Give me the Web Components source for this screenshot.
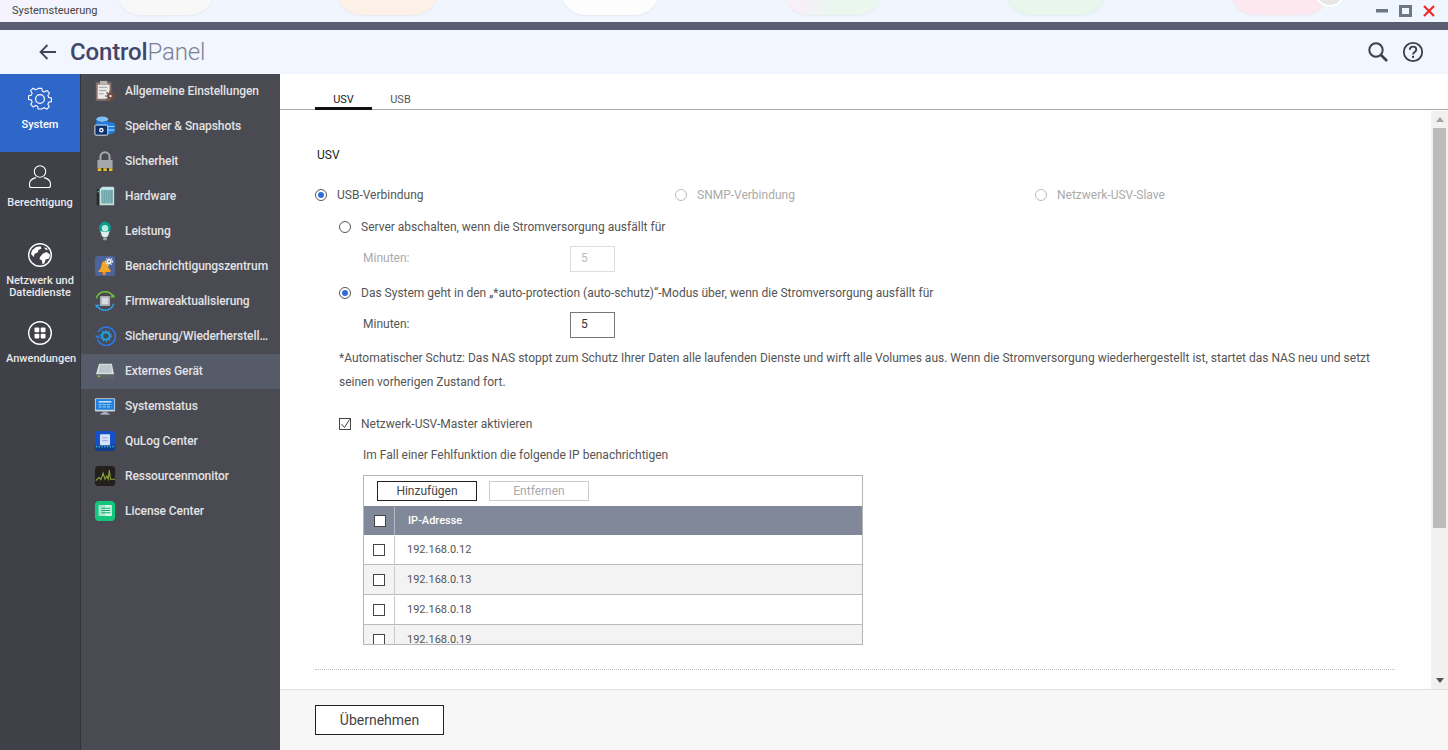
<!DOCTYPE html>
<html lang="de">
<head>
<meta charset="utf-8">
<title>Systemsteuerung</title>
<style>
  html, body { margin: 0; height: 100%; overflow: hidden; }
  body { font-family: Roboto, "Liberation Sans", sans-serif; font-size: 12px; color: #555; }
  svg { display: block; }
</style>
</head>
<body>
<qts-window>
  <qts-titlebar slot="titlebar" label="Systemsteuerung"></qts-titlebar>
  <qts-header slot="header"></qts-header>

  <qts-rail slot="rail">
    <rail-item active>
      <svg slot="icon" width="26" height="26" viewBox="0 0 26 26" fill="none" stroke="#fff" stroke-width="1.2" stroke-linejoin="round"><path d="M11 2h4l.7 3.1 2.2.9 2.7-1.7 2.8 2.8-1.7 2.7.9 2.2 3.1.7v4l-3.1.7-.9 2.2 1.7 2.7-2.8 2.8-2.7-1.7-2.2.9L15 24.9h-4l-.7-3.1-2.2-.9-2.7 1.7-2.8-2.8 1.7-2.7-.9-2.2-3.1-.7v-4l3.1-.7.9-2.2-1.7-2.7 2.8-2.8 2.7 1.7 2.2-.9z" transform="translate(1.3 .6) scale(.9)"/><circle cx="13" cy="13" r="4.4"/></svg>
      System
    </rail-item>
    <rail-item>
      <svg slot="icon" width="26" height="26" viewBox="0 0 26 26" fill="none" stroke="#fff" stroke-width="1.1"><circle cx="13" cy="7.500" r="5.700"/><path d="M9 13.600C5 14.600 2.500 16.500 2.500 20v1.500c0 1 .7 2 2 2h17c1.300 0 2-1 2-2V20c0-3.500-2.500-5.400-6.500-6.400"/></svg>
      Berechtigung
    </rail-item>
    <rail-item>
      <svg slot="icon" width="26" height="26" viewBox="0 0 26 26"><circle cx="13" cy="13" r="11.300" fill="none" stroke="#fff" stroke-width="1.400"/><path d="M5 8.500 9 5l4.500-.8 1 2.300-3 1.500-.8 2.500-3 1.200-1 3.300L4 12zM13 15l3-3.500 3.500-1.500 3.500 2.500-.8 4-3.700 1-1 3.500-2 1.500-.5-4-2.500-1.500zM17 5.500l2.500.5 1.500 2-2.500-.5z" fill="#fff"/></svg>
      Netzwerk und Dateidienste
    </rail-item>
    <rail-item>
      <svg slot="icon" width="26" height="26" viewBox="0 0 26 26"><circle cx="13" cy="13" r="11.300" fill="none" stroke="#fff" stroke-width="1.400"/><g fill="#fff"><rect x="7.500" y="7.500" width="4.800" height="4.800" rx="1"/><rect x="13.700" y="7.500" width="4.800" height="4.800" rx="1"/><rect x="7.500" y="13.700" width="4.800" height="4.800" rx="1"/><rect x="13.700" y="13.700" width="4.800" height="4.800" rx="1"/></g></svg>
      Anwendungen
    </rail-item>
  </qts-rail>

  <qts-menu slot="menu">
    <menu-item>
      <svg slot="icon" viewBox="0 0 24 24"><rect x="2" y="2.500" width="17" height="20" rx="1" fill="#86706a"/><rect x="4" y="5" width="13" height="15.500" fill="#eceae8"/><rect x="6.500" y="1" width="8" height="3.500" fill="#b9b3ae"/><path d="M5.500 8h9M5.500 11.500h8M5.500 15h5" stroke="#9a9a9a"/><circle cx="18" cy="17.500" r="3.800" fill="#6a4e42"/><circle cx="18" cy="17.500" r="5" fill="none" stroke="#6a4e42" stroke-width="1.400" stroke-dasharray="1.800 1.800"/><circle cx="18" cy="17.500" r="1.400" fill="#e6d9ce"/></svg>
      Allgemeine Einstellungen
    </menu-item>
    <menu-item>
      <svg slot="icon" viewBox="0 0 24 24"><ellipse cx="9" cy="4.500" rx="6.500" ry="3" fill="#7cc0f5"/><path d="M2.500 4.500V11h13V4.500c0 1.700-3 3-6.500 3s-6.500-1.300-6.500-3z" fill="#1f7fe0"/><path d="M14 8h5c2 0 3.500.8 3.500 2v8c0 1.500-3 3-7 3H14z" fill="#1f7fe0"/><path d="M15 12.500h7.500M15 16.500h7.500" stroke="#8fd0f8" stroke-width="1.200"/><rect x="1" y="11" width="14" height="11" rx="1" fill="#0f2f66" stroke="#e8f2ff"/><circle cx="8" cy="16.500" r="2.500" fill="#e8f2ff"/><circle cx="8" cy="16.500" r="1" fill="#0f2f66"/></svg>
      Speicher &amp; Snapshots
    </menu-item>
    <menu-item>
      <svg slot="icon" viewBox="0 0 24 24"><path d="M7 11V7.500a5 5 0 0 1 10 0V11" fill="none" stroke="#a9abb2" stroke-width="2.200"/><path d="M4.500 11h15a.8.8 0 0 1 .8.800V20H3.700v-8.200a.8.8 0 0 1 .8-.8z" fill="#a5a7ae"/><rect x="3.700" y="20" width="16.600" height="3" fill="#34343a"/><path d="M4 20h4v3H4zM10.200 20h3.800v3h-3.800zM16.400 20h3.800v3h-3.800z" fill="#e9c22b"/></svg>
      Sicherheit
    </menu-item>
    <menu-item>
      <svg slot="icon" viewBox="0 0 24 24"><path d="M3 4.500h3.500V22H3z" fill="#24282a"/><path d="M6 4.500 9 2h11.500a1.500 1.500 0 0 1 1.500 1.500V22H6z" fill="#bfe3e6"/><rect x="8" y="5.500" width="12.500" height="14.500" fill="#6da3a8"/><path d="M10 5.500V20M12.500 5.500V20M15 5.500V20M17.500 5.500V20" stroke="#8fc2c6" stroke-width=".9"/><path d="M9 20.500h11" stroke="#d5c55a" stroke-dasharray="1 1.500"/><rect x="4" y="6.500" width="1.500" height="1.500" fill="#4cd06a"/></svg>
      Hardware
    </menu-item>
    <menu-item>
      <svg slot="icon" viewBox="0 0 24 24"><path d="M12 1.500a7 7 0 0 1 6.500 7c0 3.500-2 5-2.500 7.500H8c-.5-2.500-2.500-4-2.500-7.500a7 7 0 0 1 6.500-7z" fill="#0f9a89"/><circle cx="12" cy="9" r="3.500" fill="#b5f0df"/><path d="M6.800 12c2 1.200 8.400 1.200 10.400 0-.8 1.400-1.200 2.600-1.400 4-.2 1.400-1.200 3-3.800 3s-3.600-1.600-3.800-3c-.2-1.400-.6-2.600-1.400-4z" fill="#dfecee"/><path d="M9.800 19.500h4.400l-.5 2.500h-3.400z" fill="#a0a3aa"/></svg>
      Leistung
    </menu-item>
    <menu-item>
      <svg slot="icon" viewBox="0 0 24 24"><rect x="1" y="1" width="22" height="22" rx="3.500" fill="#4d6499"/><path d="M11 6.500c3 .5 4.500 3 4.500 5.500 0 3 1.500 4 3 5l-1 1.500H5.500l-1-1c2-1 3-3 3.500-5.500.4-2.500 1-5 3-5.500z" fill="#f5a623"/><circle cx="11" cy="20" r="2" fill="#f08a1d"/><circle cx="16.500" cy="7" r="2.800" fill="#f2f4f8"/><circle cx="16.500" cy="7" r="3.800" fill="none" stroke="#f2f4f8" stroke-width="1.200" stroke-dasharray="1.400 1.400"/><circle cx="16.500" cy="7" r="1" fill="#4d6499"/></svg>
      Benachrichtigungszentrum
    </menu-item>
    <menu-item>
      <svg slot="icon" viewBox="0 0 24 24"><path d="M2.500 9C4 4.500 7.500 2 12 2c4 0 7 1.800 8.500 5" fill="none" stroke="#6fc92f" stroke-width="1.600"/><path d="m23 8-5.500.2 3.800-3.800z" fill="#6fc92f"/><path d="M21.500 15c-1.500 4.500-5 7-9.500 7-4 0-7-1.800-8.500-5" fill="none" stroke="#2f9fe0" stroke-width="1.600"/><path d="m1 16 5.500-.2-3.800 3.800z" fill="#2f9fe0"/><rect x="6.500" y="6.500" width="11" height="11" rx="1" fill="#a9adb5"/><rect x="8.500" y="8.500" width="7" height="7" fill="#d8dbe0"/></svg>
      Firmwareaktualisierung
    </menu-item>
    <menu-item>
      <svg slot="icon" viewBox="0 0 24 24"><path d="M4.500 7.500A10 10 0 1 1 4 16" fill="none" stroke="#2b79e8" stroke-width="1.800"/><path d="m.5 11.500 6.500.2-3 3.300z" fill="#2b79e8"/><circle cx="13" cy="12" r="4" fill="none" stroke="#1fa6ee" stroke-width="2"/><circle cx="13" cy="12" r="5.700" fill="none" stroke="#1fa6ee" stroke-width="1.500" stroke-dasharray="1.800 1.800"/></svg>
      Sicherung/Wiederherstellung
    </menu-item>
    <menu-item active>
      <svg slot="icon" viewBox="0 0 24 24"><path d="M5.500 4h14l2.500 12H2z" fill="#d8dde0"/><path d="M6.700 5.500h11.600l1.500 8.500H4.800z" fill="#bcc6c9"/><path d="M2 15.500h20V19a1 1 0 0 1-1 1H3a1 1 0 0 1-1-1z" fill="#5f6468"/><rect x="4.500" y="17" width="2" height="1.500" fill="#9fdc3c"/></svg>
      Externes Gerät
    </menu-item>
    <menu-item>
      <svg slot="icon" viewBox="0 0 24 24"><rect x="1" y="3.500" width="22" height="14.500" rx="1" fill="#c4d2dc"/><rect x="2" y="4.500" width="20" height="11.500" fill="#1f7fdc"/><path d="M5 7.500h14" stroke="#fff" stroke-width="1.300"/><path d="M5 10.500h14M5 13h14" stroke="#bcdcf6" stroke-dasharray="3.500 1"/><path d="M9.500 18h5v2h2.500v1.500H7V20h2.500z" fill="#a6b2ba"/></svg>
      Systemstatus
    </menu-item>
    <menu-item>
      <svg slot="icon" viewBox="0 0 24 24"><rect x="1" y="1" width="22" height="22" rx="4" fill="#1450c8"/><path d="M1 16h22v3a4 4 0 0 1-4 4H5a4 4 0 0 1-4-4z" fill="#0f3c86"/><rect x="6.500" y="4.500" width="11" height="12" rx="1" fill="#d6e2f7"/><path d="M9 8.500h6M9 11.500h6" stroke="#8fa8da"/><path d="M2 18h20" stroke="#2fa9e8" stroke-dasharray="1.500 1.500" stroke-width="2"/></svg>
      QuLog Center
    </menu-item>
    <menu-item>
      <svg slot="icon" viewBox="0 0 24 24"><rect x="1" y="1" width="22" height="22" rx="4" fill="#221f1c"/><path d="m2 17 3.500-3.500 2 2.500 2.500-7 2 6.500 2-3.500 1.500 3.500 1.200-10 1.300 10H23" fill="none" stroke="#8ea43c" stroke-width="1.200"/></svg>
      Ressourcenmonitor
    </menu-item>
    <menu-item>
      <svg slot="icon" viewBox="0 0 24 24"><rect x="1" y="1" width="22" height="22" rx="4.500" fill="#12c77c"/><rect x="5" y="5.500" width="14.500" height="12" rx="1" fill="#d2f5e6"/><path d="M5 5.500h7v12H5z" fill="#0e8f5b" opacity=".2"/><path d="M8 9h10M8 11.500h10M8 14h10" stroke="#12b271" stroke-width="1.100"/></svg>
      License Center
    </menu-item>
  </qts-menu>

  <qts-tabs slot="tabs">
    <tab-item active>USV</tab-item>
    <tab-item>USB</tab-item>
  </qts-tabs>

  <qts-scroll slot="content">
    <ups-settings></ups-settings>
  </qts-scroll>

  <qts-footer slot="footer">
    <qts-button large>Übernehmen</qts-button>
  </qts-footer>
</qts-window>

<script>
class QtsWindow extends HTMLElement {
  constructor() {
    super();
    this.attachShadow({ mode: 'open' });
  }

  connectedCallback() {
    this.shadowRoot.innerHTML = `
      <style>
        :host {
          display: grid;
          grid-template-columns: 81px 199px 1fr;
          grid-template-rows: 22px 52px 36px 1fr 61px;
          grid-template-areas:
            "title title title"
            "head head head"
            "rail menu tabs"
            "rail menu body"
            "rail menu foot";
          width: 1448px;
          height: 750px;
          background: #fff;
          overflow: hidden;
        }
        ::slotted([slot=titlebar]) { grid-area: title; }
        ::slotted([slot=header]) { grid-area: head; }
        ::slotted([slot=rail]) { grid-area: rail; }
        ::slotted([slot=menu]) { grid-area: menu; }
        ::slotted([slot=tabs]) { grid-area: tabs; }
        ::slotted([slot=content]) { grid-area: body; min-height: 0; }
        ::slotted([slot=footer]) { grid-area: foot; }
      </style>
      <slot name="titlebar"></slot>
      <slot name="header"></slot>
      <slot name="rail"></slot>
      <slot name="menu"></slot>
      <slot name="tabs"></slot>
      <slot name="content"></slot>
      <slot name="footer"></slot>
    `;
  }
}

class QtsTitlebar extends HTMLElement {
  constructor() {
    super();
    this.attachShadow({ mode: 'open' });
  }

  connectedCallback() {
    this.shadowRoot.innerHTML = `
      <style>
        :host {
          display: flex;
          align-items: center;
          position: relative;
          overflow: hidden;
          height: 22px;
          padding: 0 13px 0 12px;
          background: linear-gradient(90deg, #f5f3fd 0, #f1f5fe 12%, #f0f6fe 100%);
          font-size: 11px;
          color: #444;
        }
        .label { position: relative; flex: 1; padding-bottom: 2px; }
        .blob {
          position: absolute;
          top: -40px;
          height: 55px;
          border-radius: 26px;
          box-shadow: 0 1px 2px rgba(0, 0, 0, .05);
        }
        .dot {
          position: absolute;
          left: 1315px;
          top: -23px;
          box-sizing: border-box;
          width: 30px;
          height: 30px;
          border-radius: 50%;
          background: #e6e6e6;
          border: 2px solid #fff;
        }
        .controls { position: relative; display: flex; align-items: center; gap: 11px; }
      </style>
      <span class="blob" style="left:115px;width:100px;background:#f8f8f8"></span>
      <span class="blob" style="left:336px;width:103px;background:#fdf0e6"></span>
      <span class="blob" style="left:560px;width:100px;background:#fdfdfd"></span>
      <span class="blob" style="left:783px;width:100px;background:linear-gradient(120deg,#f8eff8 30%,#e9f7ef 60%)"></span>
      <span class="blob" style="left:1005px;width:102px;background:#e8f7ee"></span>
      <span class="blob" style="left:1230px;width:99px;background:#fde8ef"></span>
      <span class="dot"></span>
      <span class="label">${this.getAttribute('label')}</span>
      <span class="controls">
        <svg width="12" height="12" viewBox="0 0 12 12"><rect y="4" width="12" height="3.500" fill="#6f7686"/></svg>
        <svg width="13" height="12" viewBox="0 0 13 12"><rect x="1.500" y="1.500" width="10" height="9" fill="none" stroke="#6f7686" stroke-width="3"/></svg>
        <svg width="12" height="12" viewBox="0 0 12 12"><path d="m1 1 10 10M11 1 1 11" stroke="#ef2a2a" stroke-width="2.200"/></svg>
      </span>
    `;
  }
}

class QtsHeader extends HTMLElement {
  constructor() {
    super();
    this.attachShadow({ mode: 'open' });
  }

  connectedCallback() {
    this.shadowRoot.innerHTML = `
      <style>
        :host {
          display: flex;
          align-items: center;
          box-sizing: border-box;
          height: 52px;
          padding: 0 24px 0 39px;
          background: #f2f6fe;
          border-top: 8px solid #5a5d72;
        }
        .logo { flex: 1; margin-left: 14px; font-size: 24px; line-height: 44px; letter-spacing: -.15px; }
        .logo b { font-weight: 500; color: #43466a; }
        .logo span { font-weight: 300; color: #7b7f94; }
        .tools { display: flex; align-items: center; gap: 13px; }
      </style>
      <svg width="17" height="16" viewBox="0 0 17 16" fill="none" stroke="#43465a" stroke-width="1.800"><path d="M17 8H1.500M8.500 1 1.500 8l7 7"/></svg>
      <div class="logo"><b>Control</b><span>Panel</span></div>
      <div class="tools">
        <svg width="22" height="22" viewBox="0 0 22 22" fill="none" stroke="#3d3f4a"><circle cx="9" cy="9" r="6.700" stroke-width="2"/><path d="m14 14 6 6" stroke-width="2.600"/></svg>
        <svg width="22" height="22" viewBox="0 0 22 22" fill="none" stroke="#3d3f4a"><circle cx="11" cy="11" r="9.200" stroke-width="1.800"/><path d="M7.800 8.800c0-2 1.400-3.200 3.300-3.200s3.200 1.200 3.200 2.900c0 2.500-3.200 2.500-3.200 5" stroke-width="1.900"/><rect x="10" y="14.800" width="2.100" height="2.100" fill="#3d3f4a" stroke="none"/></svg>
      </div>
    `;
  }
}

class QtsRail extends HTMLElement {
  constructor() {
    super();
    this.attachShadow({ mode: 'open' });
  }

  connectedCallback() {
    this.shadowRoot.innerHTML = `
      <style>
        :host {
          display: flex;
          flex-direction: column;
          box-sizing: border-box;
          width: 81px;
          background: #3f4048;
          border-right: 1px solid #34343b;
        }
      </style>
      <slot></slot>
    `;
  }
}

class RailItem extends HTMLElement {
  constructor() {
    super();
    this.attachShadow({ mode: 'open' });
  }

  connectedCallback() {
    this.shadowRoot.innerHTML = `
      <style>
        :host {
          display: flex;
          flex-direction: column;
          align-items: center;
          box-sizing: border-box;
          height: 78px;
          padding: 12px 6px 0;
          color: #e9e9ec;
          font-size: 11px;
          font-weight: 500;
          line-height: 12px;
          text-align: center;
        }
        :host([active]) { background: #2f67c8; color: #fff; }
        .text { width: 68px; margin-top: 7px; }
      </style>
      <slot name="icon"></slot>
      <div class="text"><slot></slot></div>
    `;
  }
}

class QtsMenu extends HTMLElement {
  constructor() {
    super();
    this.attachShadow({ mode: 'open' });
  }

  connectedCallback() {
    this.shadowRoot.innerHTML = `
      <style>
        :host {
          display: flex;
          flex-direction: column;
          background: #4a4a52;
        }
      </style>
      <slot></slot>
    `;
  }
}

class MenuItem extends HTMLElement {
  constructor() {
    super();
    this.attachShadow({ mode: 'open' });
  }

  connectedCallback() {
    this.shadowRoot.innerHTML = `
      <style>
        :host {
          display: flex;
          align-items: center;
          gap: 9px;
          box-sizing: border-box;
          height: 35px;
          padding: 0 10px 1px 13px;
          color: #e2e2e4;
          font-size: 12px;
          font-weight: 500;
          letter-spacing: -.08px;
        }
        :host([active]) { background: #565b69; }
        ::slotted(svg) { flex: none; width: 22px; height: 22px; }
        .text { flex: 1; min-width: 0; white-space: nowrap; overflow: hidden; text-overflow: ellipsis; }
      </style>
      <slot name="icon"></slot>
      <div class="text"><slot></slot></div>
    `;
  }
}

class QtsTabs extends HTMLElement {
  constructor() {
    super();
    this.attachShadow({ mode: 'open' });
  }

  connectedCallback() {
    this.shadowRoot.innerHTML = `
      <style>
        :host {
          display: flex;
          box-sizing: border-box;
          height: 36px;
          padding-left: 35px;
          border-bottom: 1px solid #aaa;
          align-items: flex-end;
        }
      </style>
      <slot></slot>
    `;
  }
}

class TabItem extends HTMLElement {
  constructor() {
    super();
    this.attachShadow({ mode: 'open' });
  }

  connectedCallback() {
    this.shadowRoot.innerHTML = `
      <style>
        :host {
          display: block;
          box-sizing: border-box;
          width: 57px;
          height: 19px;
          margin-bottom: -1px;
          font-size: 11px;
          line-height: 18px;
          text-align: center;
          color: #555;
        }
        :host([active]) { color: #222; border-bottom: 3px solid #111; }
      </style>
      <slot></slot>
    `;
  }
}

class QtsScroll extends HTMLElement {
  constructor() {
    super();
    this.attachShadow({ mode: 'open' });
  }

  connectedCallback() {
    this.shadowRoot.innerHTML = `
      <style>
        :host { display: flex; overflow: hidden; }
        .view { flex: 1; min-width: 0; overflow: hidden; }
        .bar {
          display: flex;
          flex-direction: column;
          align-items: center;
          box-sizing: border-box;
          width: 17px;
          margin-top: 1px;
          background: #f1f1f1;
        }
        .arrow { flex: none; height: 17px; display: flex; align-items: center; justify-content: center; }
        .track { flex: 1; width: 13px; }
        .thumb { height: 400px; background: #bcbcbc; }
      </style>
      <div class="view"><slot></slot></div>
      <div class="bar">
        <div class="arrow"><svg width="8" height="5" viewBox="0 0 8 5"><path d="M4 0 8 5H0z" fill="#a5a5a5"/></svg></div>
        <div class="track"><div class="thumb"></div></div>
        <div class="arrow"><svg width="8" height="5" viewBox="0 0 8 5"><path d="M4 5 8 0H0z" fill="#555"/></svg></div>
      </div>
    `;
  }
}

class QtsRadio extends HTMLElement {
  constructor() {
    super();
    this.attachShadow({ mode: 'open' });
  }

  connectedCallback() {
    this.shadowRoot.innerHTML = `
      <style>
        :host { display: inline-flex; align-items: center; gap: 10px; height: 20px; }
        :host([disabled]) { color: #aaa; }
        .dot {
          box-sizing: border-box;
          display: flex;
          align-items: center;
          justify-content: center;
          width: 12px;
          height: 12px;
          border: 1px solid #555;
          border-radius: 50%;
          background: #fff;
        }
        :host([disabled]) .dot { border-color: #bbb; }
        :host([checked]) .dot::after {
          content: "";
          width: 6px;
          height: 6px;
          border-radius: 50%;
          background: #2e6bd6;
        }
      </style>
      <span class="dot"></span><span><slot></slot></span>
    `;
  }
}

class QtsCheckbox extends HTMLElement {
  constructor() {
    super();
    this.attachShadow({ mode: 'open' });
  }

  connectedCallback() {
    this.shadowRoot.innerHTML = `
      <style>
        :host { display: inline-flex; align-items: center; gap: 10px; }
        .box {
          box-sizing: border-box;
          width: 12px;
          height: 12px;
          border: 1px solid #444;
          background: #fff;
          overflow: visible;
        }
      </style>
      <span class="box">${this.hasAttribute('checked')
        ? '<svg width="12" height="12" viewBox="0 0 12 12" fill="none" stroke="#444" style="display:block;margin:-1px"><path d="m2.500 6 3 3.500L10.500 1.500"/></svg>'
        : ''}</span><slot></slot>
    `;
  }
}

class QtsButton extends HTMLElement {
  constructor() {
    super();
    this.attachShadow({ mode: 'open' });
  }

  connectedCallback() {
    this.shadowRoot.innerHTML = `
      <style>
        :host {
          display: inline-flex;
          align-items: center;
          justify-content: center;
          box-sizing: border-box;
          width: 100px;
          height: 20px;
          border: 1px solid #222;
          background: #fff;
          color: #444;
        }
        :host([disabled]) { border-color: #ccc; color: #aaa; }
        :host([large]) { width: 129px; height: 30px; font-size: 14px; }
      </style>
      <slot></slot>
    `;
  }
}

class IpTable extends HTMLElement {
  constructor() {
    super();
    this.attachShadow({ mode: 'open' });
  }

  connectedCallback() {
    const rows = ['192.168.0.12', '192.168.0.13', '192.168.0.18', '192.168.0.19'];
    this.shadowRoot.innerHTML = `
      <style>
        :host {
          display: block;
          box-sizing: border-box;
          width: 500px;
          height: 170px;
          border: 1px solid #b5b5b5;
          overflow: hidden;
          background: #fff;
        }
        .toolbar { display: flex; align-items: center; gap: 12px; height: 30px; padding-left: 13px; }
        .head, .row { display: flex; align-items: stretch; }
        .head { height: 29px; background: #81889a; color: #fff; font-size: 11px; font-weight: 500; }
        .row { flex: none; height: 30px; box-sizing: border-box; border-bottom: 1px solid #bbb; font-size: 11px; color: #555; }
        .row:nth-child(even) { background: #f3f3f3; }
        .check { flex: none; width: 30px; display: flex; align-items: center; justify-content: center; }
        .sep { flex: none; width: 1px; margin-top: 1px; background: #c8c8c8; }
        .head .sep { background: #b4b8c4; }
        .cell { display: flex; align-items: center; padding-left: 13px; }
        .row .cell { padding-left: 12px; }
        .head .check qts-checkbox { transform: translateX(1px); }
      </style>
      <div class="toolbar">
        <qts-button>Hinzufügen</qts-button>
        <qts-button disabled>Entfernen</qts-button>
      </div>
      <div class="head">
        <div class="check"><qts-checkbox></qts-checkbox></div>
        <div class="sep"></div>
        <div class="cell">IP-Adresse</div>
      </div>
      <div class="rows">
        ${rows.map(ip => `
          <div class="row">
            <div class="check"><qts-checkbox></qts-checkbox></div>
            <div class="sep"></div>
            <div class="cell">${ip}</div>
          </div>`).join('')}
      </div>
    `;
  }
}

class UpsSettings extends HTMLElement {
  constructor() {
    super();
    this.attachShadow({ mode: 'open' });
  }

  connectedCallback() {
    this.shadowRoot.innerHTML = `
      <style>
        :host {
          display: block;
          box-sizing: border-box;
          padding: 36px 36px 0 35px;
          font-size: 12px;
          color: #555;
        }
        h2 { margin: 0 0 0 2px; height: 18px; font-size: 12px; line-height: 18px; font-weight: 400; color: #222; }
        .modes { display: grid; grid-template-columns: repeat(3, 360px); margin-top: 21px; height: 20px; }
        .row { display: flex; align-items: center; padding-left: 24px; }
        .r1 { margin-top: 12px; height: 20px; }
        .field { margin-top: 9px; height: 26px; padding-left: 48px; }
        .field label { width: 207px; padding-bottom: 2px; }
        .field.off { color: #aaa; }
        .r2 { margin-top: 11px; height: 20px; }
        .field.on { margin-top: 9px; }
        .input {
          box-sizing: border-box;
          width: 45px;
          height: 26px;
          padding-left: 10px;
          line-height: 22px;
          border: 1px solid #777;
          color: #333;
        }
        .off .input { border-color: #ddd; color: #bbb; }
        p { margin: 8px 0 0 24px; line-height: 24px; font-size: 12px; color: #555; }
        .r3 { margin-top: 20px; height: 20px; }
        .r4 { margin-top: 11px; height: 20px; padding-left: 48px; }
        ip-table { margin: 10px 0 0 48px; }
        hr { margin: 24px 0 0; border: 0; border-top: 1px dotted #bbb; }
      </style>
      <h2>USV</h2>
      <div class="modes">
        <div><qts-radio checked>USB-Verbindung</qts-radio></div>
        <div><qts-radio disabled>SNMP-Verbindung</qts-radio></div>
        <div><qts-radio disabled>Netzwerk-USV-Slave</qts-radio></div>
      </div>
      <div class="row r1"><qts-radio>Server abschalten, wenn die Stromversorgung ausfällt für</qts-radio></div>
      <div class="row field off"><label>Minuten:</label><div class="input">5</div></div>
      <div class="row r2"><qts-radio checked>Das System geht in den „*auto-protection (auto-schutz)“-Modus über, wenn die Stromversorgung ausfällt für</qts-radio></div>
      <div class="row field on"><label>Minuten:</label><div class="input">5</div></div>
      <p>*Automatischer Schutz: Das NAS stoppt zum Schutz Ihrer Daten alle laufenden Dienste und wirft alle Volumes aus. Wenn die Stromversorgung wiederhergestellt ist, startet das NAS neu und setzt seinen vorherigen Zustand fort.</p>
      <div class="row r3"><qts-checkbox checked>Netzwerk-USV-Master aktivieren</qts-checkbox></div>
      <div class="row r4">Im Fall einer Fehlfunktion die folgende IP benachrichtigen</div>
      <ip-table></ip-table>
      <hr>
    `;
  }
}

class QtsFooter extends HTMLElement {
  constructor() {
    super();
    this.attachShadow({ mode: 'open' });
  }

  connectedCallback() {
    this.shadowRoot.innerHTML = `
      <style>
        :host {
          display: flex;
          align-items: center;
          box-sizing: border-box;
          height: 61px;
          padding: 0 0 0 35px;
          background: #f7f7f7;
          border-top: 1px solid #ddd;
        }
      </style>
      <slot></slot>
    `;
  }
}

customElements.define('qts-window', QtsWindow);
customElements.define('qts-titlebar', QtsTitlebar);
customElements.define('qts-header', QtsHeader);
customElements.define('qts-rail', QtsRail);
customElements.define('rail-item', RailItem);
customElements.define('qts-menu', QtsMenu);
customElements.define('menu-item', MenuItem);
customElements.define('qts-tabs', QtsTabs);
customElements.define('tab-item', TabItem);
customElements.define('qts-scroll', QtsScroll);
customElements.define('qts-radio', QtsRadio);
customElements.define('qts-checkbox', QtsCheckbox);
customElements.define('qts-button', QtsButton);
customElements.define('ip-table', IpTable);
customElements.define('ups-settings', UpsSettings);
customElements.define('qts-footer', QtsFooter);
</script>
</body>
</html>
